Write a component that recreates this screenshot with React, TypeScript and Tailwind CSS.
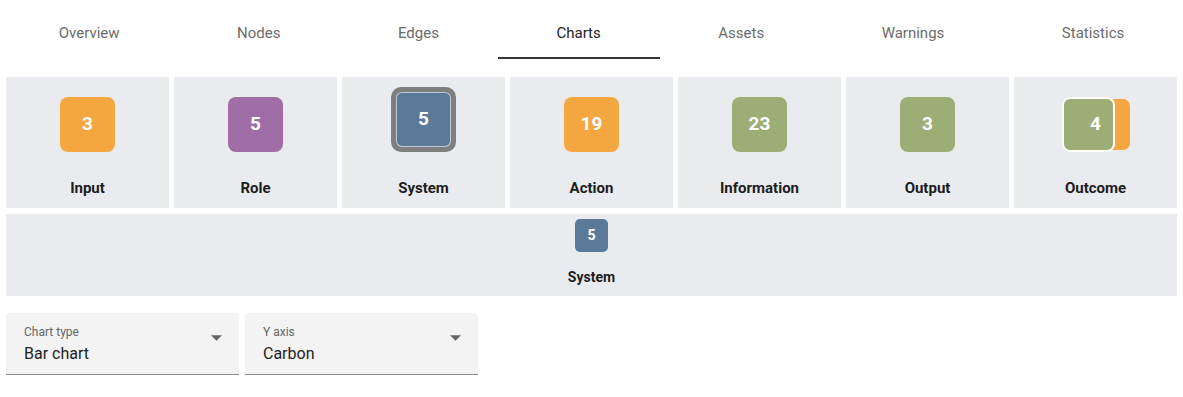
import { useState } from "react";

const tabs = ["Overview", "Nodes", "Edges", "Charts", "Assets", "Warnings", "Statistics"];

interface Item {
  label: string;
  count: number;
  color: string;
  selected?: boolean;
  stacked?: boolean;
}

const items: Item[] = [
  { label: "Input", count: 3, color: "bg-[#f4a641]" },
  { label: "Role", count: 5, color: "bg-[#a06ea6]" },
  { label: "System", count: 5, color: "bg-[#5b7a9a]", selected: true },
  { label: "Action", count: 19, color: "bg-[#f4a641]" },
  { label: "Information", count: 23, color: "bg-[#9cad76]" },
  { label: "Output", count: 3, color: "bg-[#9cad76]" },
  { label: "Outcome", count: 4, color: "bg-[#9cad76]", stacked: true },
];

function Badge({ item }: { item: Item }) {
  if (item.stacked) {
    return (
      <div className="relative w-[68px] h-[55px]">
        <div className="absolute right-0 top-[2px] w-[40px] h-[51px] rounded-[7px] bg-[#f4a641]" />
        <div
          className={`absolute left-0 top-0 w-[53px] h-[55px] rounded-[8px] border-2 border-white ${item.color}`}
        />
        <span className="absolute inset-0 flex items-center justify-center text-white font-bold text-[19px]">
          {item.count}
        </span>
      </div>
    );
  }
  if (item.selected) {
    return (
      <div className="w-[65px] h-[65px] -mt-[10px] rounded-[10px] bg-[#7f7f7f] p-[5px]">
        <div
          className={`w-full h-full rounded-[6px] border border-white/60 flex items-center justify-center text-white font-bold text-[19px] ${item.color}`}
        >
          {item.count}
        </div>
      </div>
    );
  }
  return (
    <div
      className={`w-[55px] h-[55px] rounded-[8px] flex items-center justify-center text-white font-bold text-[19px] ${item.color}`}
    >
      {item.count}
    </div>
  );
}

function Select({ label, value }: { label: string; value: string }) {
  return (
    <div className="relative w-[233px] h-[62px] rounded-t-[4px] bg-[#f3f3f3] border-b border-[#8c8c8c] pl-[18px] pt-[11px]">
      <div className="text-[12px] text-[#666] leading-[16px]">{label}</div>
      <div className="text-[16px] text-[#222] leading-[22px] mt-[3px]">{value}</div>
      <svg
        className="absolute right-[17px] top-[22px]"
        width="11"
        height="6"
        viewBox="0 0 10 5"
      >
        <path d="M0 0 L5 5 L10 0 Z" fill="#666" />
      </svg>
    </div>
  );
}

export default function App() {
  const [active, setActive] = useState("Charts");
  return (
    <div className="w-[1183px] h-[397px] bg-white font-['Roboto',sans-serif]">
      <div className="flex h-[60px]">
        {tabs.map((t) => (
          <button
            key={t}
            onClick={() => setActive(t)}
            className={`flex-auto px-[56px] h-[60px] flex items-center justify-center text-[15px] relative ${
              active === t ? "text-[#222]" : "text-[#6b6b6b]"
            }`}
          >
            <span className="mt-[6px]">{t}</span>
            {active === t && (
              <span className="absolute left-0 right-0 bottom-[1px] h-[2px] bg-[#333]" />
            )}
          </button>
        ))}
      </div>
      <div className="px-[6px] pt-[17px] flex flex-col gap-[6px]">
        <div className="grid grid-cols-7 gap-[5px]">
          {items.map((it) => (
            <div
              key={it.label}
              className="h-[131px] bg-[#eaebef] flex flex-col items-center pt-[20px]"
            >
              <Badge item={it} />
              <div className="mt-[25px] text-[15px] font-bold text-[#1d1d1d]">{it.label}</div>
            </div>
          ))}
        </div>
        <div className="h-[82px] bg-[#eaebef] flex flex-col items-center pt-[5px]">
          <div className="w-[33px] h-[33px] rounded-[5px] bg-[#5b7a9a] flex items-center justify-center text-white font-bold text-[14px]">
            5
          </div>
          <div className="mt-[15px] text-[14px] font-bold text-[#1d1d1d]">System</div>
        </div>
      </div>
      <div className="px-[6px] pt-[17px] flex gap-[6px]">
        <Select label="Chart type" value="Bar chart" />
        <Select label="Y axis" value="Carbon" />
      </div>
    </div>
  );
}
